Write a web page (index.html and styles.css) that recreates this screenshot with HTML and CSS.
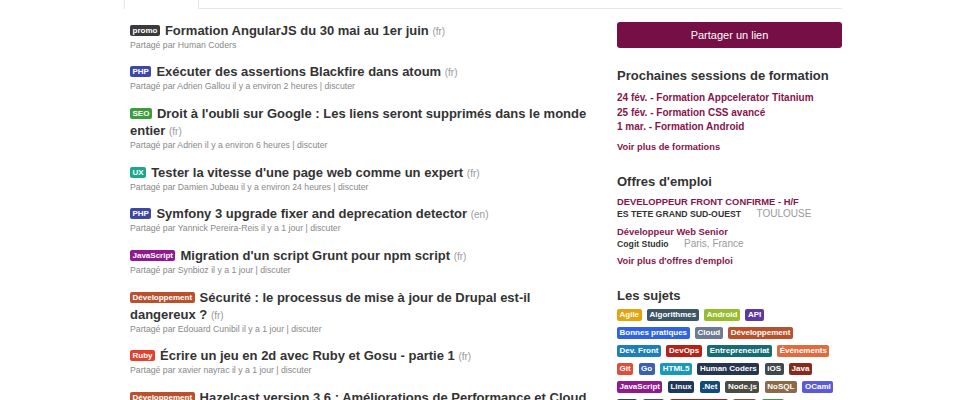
FILE: index.html
```html
<!DOCTYPE html>
<html lang="fr">
<head>
  <meta charset="UTF-8">
  <title>Human Coders News</title>
  <link rel="stylesheet" href="styles.css">
</head>
<body>
<div class="page">
  <div class="main">
    <div class="tabs">
      <div class="tab active"></div>
      <div class="tab rest"></div>
    </div>
    <ul class="news">
      <li>
        <h2><span class="badge b-promo">promo</span>Formation AngularJS du 30 mai au 1er juin <span class="lang">(fr)</span></h2>
        <p class="meta">Partagé par Human Coders</p>
      </li>
      <li>
        <h2><span class="badge b-php">PHP</span>Exécuter des assertions Blackfire dans atoum <span class="lang">(fr)</span></h2>
        <p class="meta">Partagé par Adrien Gallou il y a environ 2 heures | <a href="#">discuter</a></p>
      </li>
      <li>
        <h2><span class="badge b-seo">SEO</span>Droit à l'oubli sur Google : Les liens seront supprimés dans le monde entier <span class="lang">(fr)</span></h2>
        <p class="meta">Partagé par Adrien il y a environ 6 heures | <a href="#">discuter</a></p>
      </li>
      <li>
        <h2><span class="badge b-ux">UX</span>Tester la vitesse d'une page web comme un expert <span class="lang">(fr)</span></h2>
        <p class="meta">Partagé par Damien Jubeau il y a environ 24 heures | <a href="#">discuter</a></p>
      </li>
      <li>
        <h2><span class="badge b-php">PHP</span>Symfony 3 upgrade fixer and deprecation detector <span class="lang">(en)</span></h2>
        <p class="meta">Partagé par Yannick Pereira-Reis il y a 1 jour | <a href="#">discuter</a></p>
      </li>
      <li>
        <h2><span class="badge b-js">JavaScript</span>Migration d'un script Grunt pour npm script <span class="lang">(fr)</span></h2>
        <p class="meta">Partagé par Synbioz il y a 1 jour | <a href="#">discuter</a></p>
      </li>
      <li>
        <h2><span class="badge b-dev">Développement</span>Sécurité : le processus de mise à jour de Drupal est-il dangereux ? <span class="lang">(fr)</span></h2>
        <p class="meta">Partagé par Edouard Cunibil il y a 1 jour | <a href="#">discuter</a></p>
      </li>
      <li>
        <h2><span class="badge b-ruby">Ruby</span>Écrire un jeu en 2d avec Ruby et Gosu - partie 1 <span class="lang">(fr)</span></h2>
        <p class="meta">Partagé par xavier nayrac il y a 1 jour | <a href="#">discuter</a></p>
      </li>
      <li>
        <h2><span class="badge b-dev">Développement</span>Hazelcast version 3.6 : Améliorations de Performance et Cloud <span class="lang">(fr)</span></h2>
        <p class="meta">Partagé par Human Coders il y a 2 jours | <a href="#">discuter</a></p>
      </li>
    </ul>
  </div>

  <div class="side">
    <a class="share" href="#">Partager un lien</a>

    <div class="block">
      <h3>Prochaines sessions de formation</h3>
      <ul class="sessions">
        <li><a href="#">24 fév. - Formation Appcelerator Titanium</a></li>
        <li><a href="#">25 fév. - Formation CSS avancé</a></li>
        <li><a href="#">1 mar. - Formation Android</a></li>
      </ul>
      <a class="more" href="#">Voir plus de formations</a>
    </div>

    <div class="block">
      <h3>Offres d'emploi</h3>
      <div class="job">
        <a href="#">DEVELOPPEUR FRONT CONFIRME - H/F</a>
        <div class="company">ES TETE GRAND SUD-OUEST <span class="city">TOULOUSE</span></div>
      </div>
      <div class="job">
        <a href="#">Développeur Web Senior</a>
        <div class="company">Cogit Studio <span class="city">Paris, France</span></div>
      </div>
      <a class="more jobs-more" href="#">Voir plus d'offres d'emploi</a>
    </div>

    <div class="block">
      <h3>Les sujets</h3>
      <div class="tags">
        <a class="tag t-agile" href="#">Agile</a>
        <a class="tag t-algo" href="#">Algorithmes</a>
        <a class="tag t-android" href="#">Android</a>
        <a class="tag t-api" href="#">API</a>
        <a class="tag t-bonnes" href="#">Bonnes pratiques</a>
        <a class="tag t-cloud" href="#">Cloud</a>
        <a class="tag t-dev" href="#">Développement</a>
        <a class="tag t-front" href="#">Dev. Front</a>
        <a class="tag t-devops" href="#">DevOps</a>
        <a class="tag t-entre" href="#">Entrepreneuriat</a>
        <a class="tag t-event" href="#">Événements</a>
        <a class="tag t-git" href="#">Git</a>
        <a class="tag t-go" href="#">Go</a>
        <a class="tag t-html" href="#">HTML5</a>
        <a class="tag t-hc" href="#">Human Coders</a>
        <a class="tag t-ios" href="#">iOS</a>
        <a class="tag t-java" href="#">Java</a>
        <a class="tag t-js" href="#">JavaScript</a>
        <a class="tag t-linux" href="#">Linux</a>
        <a class="tag t-net" href="#">.Net</a>
        <a class="tag t-node" href="#">Node.js</a>
        <a class="tag t-nosql" href="#">NoSQL</a>
        <a class="tag t-ocaml" href="#">OCaml</a>
        <a class="tag t-perl" href="#">Perl</a>
        <a class="tag t-php" href="#">PHP</a>
        <a class="tag t-rails" href="#">Ruby on Rails</a>
        <a class="tag t-rust" href="#">Rust</a>
        <a class="tag t-seo" href="#">SEO</a>
      </div>
    </div>
  </div>
</div>
</body>
</html>
```

FILE: styles.css
```css
body {
  margin: 0;
  background: #fff;
  color: #333;
  font-family: 'Liberation Sans', Arial, sans-serif;
}
a {
  text-decoration: none;
  color: inherit;
}
ul {
  list-style: none;
  margin: 0;
  padding: 0;
}
.page {
  display: flex;
  gap: 21px;
  width: 718px;
  margin: 0 0 0 124px;
}
.main {
  width: 472px;
}
.tabs {
  display: flex;
  height: 9px;
}
.tab.active {
  width: 73px;
  border-left: 1px solid #e6e6e6;
  border-right: 1px solid #e6e6e6;
}
.tab.rest {
  flex: 1;
  border-bottom: 1px solid #e6e6e6;
  margin-right: -246px;
}
.news {
  margin-top: 12.5px;
  padding-left: 6px;
}
.news li {
  margin-bottom: 11.7px;
}
.news h2 {
  margin: 0;
  font-size: 13px;
  line-height: 17px;
  font-weight: bold;
  color: #333;
}
.lang {
  font-size: 10px;
  line-height: 1;
  font-weight: normal;
  color: #999;
}
.badge {
  display: inline-block;
  padding: 0 2.5px;
  margin-right: 5px;
  border-radius: 2px;
  font-size: 8px;
  line-height: 11px;
  font-weight: bold;
  color: #fff;
  vertical-align: 2px;
}
.b-promo { background: #3a3a3a; }
.b-php { background: #3d48a6; }
.b-seo { background: #3c9d3c; }
.b-ux { background: #1ba88a; }
.b-js { background: #8e1a8e; }
.b-dev { background: #b9522c; }
.b-ruby { background: #e2412e; }
.meta {
  margin: 0;
  font-size: 8.7px;
  line-height: 13px;
  color: #888;
}

.side {
  width: 225px;
  padding-top: 22px;
}
.share {
  display: block;
  height: 26px;
  line-height: 26px;
  border-radius: 3px;
  background: #760f45;
  color: #fff;
  font-size: 11px;
  text-align: center;
}
.block {
  margin-top: 19px;
}
.block h3 {
  margin: 0;
  font-size: 13px;
  line-height: 18px;
  font-weight: bold;
  color: #333;
}
.sessions {
  margin-top: 6px;
}
.sessions li {
  font-size: 10px;
  line-height: 14.5px;
  font-weight: bold;
  color: #87154b;
}
.more {
  display: block;
  margin-top: 5.5px;
  font-size: 9.3px;
  line-height: 14px;
  font-weight: bold;
  color: #87154b;
}
.job {
  margin-top: 4px;
  font-size: 9.4px;
  line-height: 13px;
  font-weight: bold;
  color: #87154b;
}
.company {
  font-size: 8.7px;
  color: #333;
}
.city {
  margin-left: 13px;
  font-size: 10px;
  line-height: 1;
  font-weight: normal;
  color: #999;
}
.jobs-more {
  margin-top: 2.5px;
}
.tags {
  display: flex;
  flex-wrap: wrap;
  margin-top: 4.5px;
}
.tag {
  display: block;
  padding: 0 2.5px;
  margin: 0 5.5px 6px 0;
  border-radius: 2px;
  font-size: 8px;
  line-height: 12px;
  font-weight: bold;
  color: #fff;
}
.t-agile { background: #e5a50a; }
.t-algo { background: #3e5563; }
.t-android { background: #97bd2e; }
.t-api { background: #5d3b9e; }
.t-bonnes { background: #2f63e0; }
.t-cloud { background: #6d7a91; }
.t-dev { background: #b9522c; }
.t-front { background: #1c7fb5; }
.t-devops { background: #b3231a; }
.t-entre { background: #176b72; }
.t-event { background: #e06b3f; }
.t-git { background: #e14b3b; }
.t-go { background: #3c5fae; }
.t-html { background: #1a98b9; }
.t-hc { background: #26364f; }
.t-ios { background: #3f484d; }
.t-java { background: #88291d; }
.t-js { background: #8e1a8e; }
.t-linux { background: #1d3957; }
.t-net { background: #134b78; }
.t-node { background: #4a4b41; }
.t-nosql { background: #8c6a48; }
.t-ocaml { background: #5b5bd9; }
.t-perl { background: #1d4b6e; }
.t-php { background: #3d48a6; }
.t-rails { background: #b01c1c; }
.t-rust { background: #8b4a2a; }
.t-seo { background: #3c9d3c; }
```
